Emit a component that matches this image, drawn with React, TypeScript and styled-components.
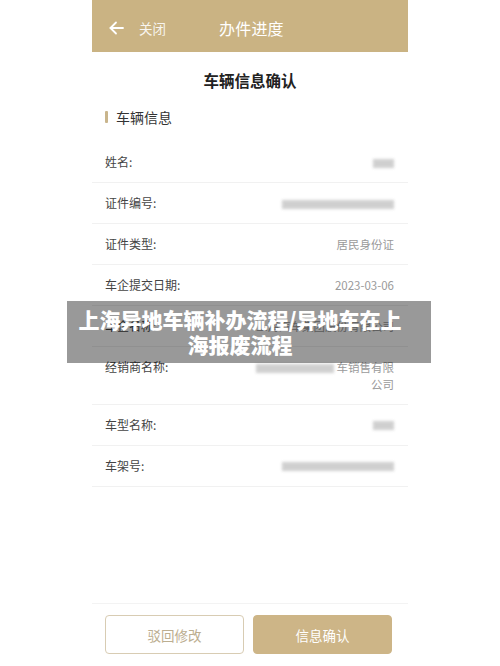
import styled, { createGlobalStyle } from "styled-components"

const GlobalStyle = createGlobalStyle`
    html, body {
        margin: 0;
        padding: 0;
        background: #fff;
    }
    body {
        font-family: "Noto Sans CJK SC", "Noto Sans", "Liberation Sans", sans-serif;
    }
`

const Page = styled.div`
    position: relative;
    width: 500px;
    height: 666px;
    overflow: hidden;
    background: #fff;
`

const Phone = styled.div`
    width: 316px;
    height: 666px;
    margin: 0 auto;
    display: flex;
    flex-direction: column;
`

const Header = styled.header`
    height: 52px;
    flex-shrink: 0;
    background: #cab383;
    display: flex;
    align-items: center;
    padding: 4px 0 0 17px;
    box-sizing: border-box;
    color: #fff;
`

const Back = styled.div`
    display: flex;
    align-items: center;
    gap: 15px;
    font-size: 13.5px;
    color: rgba(255, 255, 255, 0.88);
    width: 110px;
`

const HeaderTitle = styled.h1`
    margin: 0;
    font-size: 16px;
    font-weight: 400;
    letter-spacing: 0.2px;
`

const Title = styled.h2`
    margin: 18px 0 0;
    text-align: center;
    font-size: 15.5px;
    font-weight: 700;
    color: #222;
    line-height: 20px;
`

const SectionHead = styled.div`
    display: flex;
    align-items: center;
    gap: 8px;
    margin: 17px 0 15px 13px;
    font-size: 14px;
    color: #333;
    line-height: 20px;
    &::before {
        content: "";
        width: 3px;
        height: 12px;
        border-radius: 1px;
        background: #c9b58c;
    }
`

const Row = styled.div`
    display: flex;
    justify-content: space-between;
    align-items: flex-start;
    padding: 11px 14px 11px 13px;
    border-bottom: 1px solid #f1f1f1;
`

const Label = styled.span`
    font-size: 12px;
    line-height: 18px;
    color: #444;
`

const Value = styled.span`
    font-size: 11.5px;
    line-height: 17px;
    padding-top: 0.5px;
    color: #9a9a9a;
    text-align: right;
`

const Blur = styled.span<{ $w: number }>`
    display: inline-block;
    width: ${(p) => p.$w}px;
    height: 9px;
    vertical-align: middle;
    background: #c4c4c4;
    filter: blur(1.5px);
    opacity: 0.8;
`

const Spacer = styled.div`
    flex: 1;
    border-bottom: 1px solid #f3f3f3;
`

const Actions = styled.div`
    display: flex;
    gap: 9px;
    padding: 11px 16px 12px 13px;
`

const Button = styled.button<{ $primary?: boolean }>`
    flex: 1;
    height: 39px;
    border-radius: 4px;
    font-family: inherit;
    font-size: 13.5px;
    border: 1px solid ${(p) => (p.$primary ? "#cdb587" : "#d8ccb3")};
    background: ${(p) => (p.$primary ? "#cdb587" : "#fff")};
    color: ${(p) => (p.$primary ? "#fff" : "#bcae90")};
`

const Banner = styled.div`
    position: absolute;
    left: 67px;
    top: 301px;
    width: 364px;
    padding: 6px 18px 6px 0;
    box-sizing: border-box;
    background: rgba(0, 0, 0, 0.4);
    color: #fff;
    text-align: center;
    font-size: 21px;
    font-weight: 900;
    line-height: 25px;
`

function ArrowLeft() {
    return (
        <svg width="15" height="14" viewBox="0 0 15 14" fill="none" stroke="#fff" strokeWidth="1.8" strokeLinecap="round" strokeLinejoin="round">
            <path d="M14 7H1.5" />
            <path d="M7 1.5L1.5 7L7 12.5" />
        </svg>
    )
}

const rows: { label: string; value: React.ReactNode }[] = [
    { label: "姓名:", value: <Blur $w={21} /> },
    { label: "证件编号:", value: <Blur $w={112} /> },
    { label: "证件类型:", value: "居民身份证" },
    { label: "车企提交日期:", value: "2023-03-06" },
    { label: "车企名称:", value: "上海汽车集团股份有限公司" },
    {
        label: "经销商名称:",
        value: (
            <>
                <Blur $w={78} /> 车销售有限
                <br />
                公司
            </>
        ),
    },
    { label: "车型名称:", value: <Blur $w={21} /> },
    { label: "车架号:", value: <Blur $w={112} /> },
]

export default function App() {
    return (
        <Page>
            <GlobalStyle />
            <Phone>
                <Header>
                    <Back>
                        <ArrowLeft />
                        关闭
                    </Back>
                    <HeaderTitle>办件进度</HeaderTitle>
                </Header>
                <Title>车辆信息确认</Title>
                <SectionHead>车辆信息</SectionHead>
                {rows.map((r) => (
                    <Row key={r.label}>
                        <Label>{r.label}</Label>
                        <Value>{r.value}</Value>
                    </Row>
                ))}
                <Spacer />
                <Actions>
                    <Button>驳回修改</Button>
                    <Button $primary>信息确认</Button>
                </Actions>
            </Phone>
            <Banner>
                上海异地车辆补办流程/异地车在上
                <br />
                海报废流程
            </Banner>
        </Page>
    )
}
